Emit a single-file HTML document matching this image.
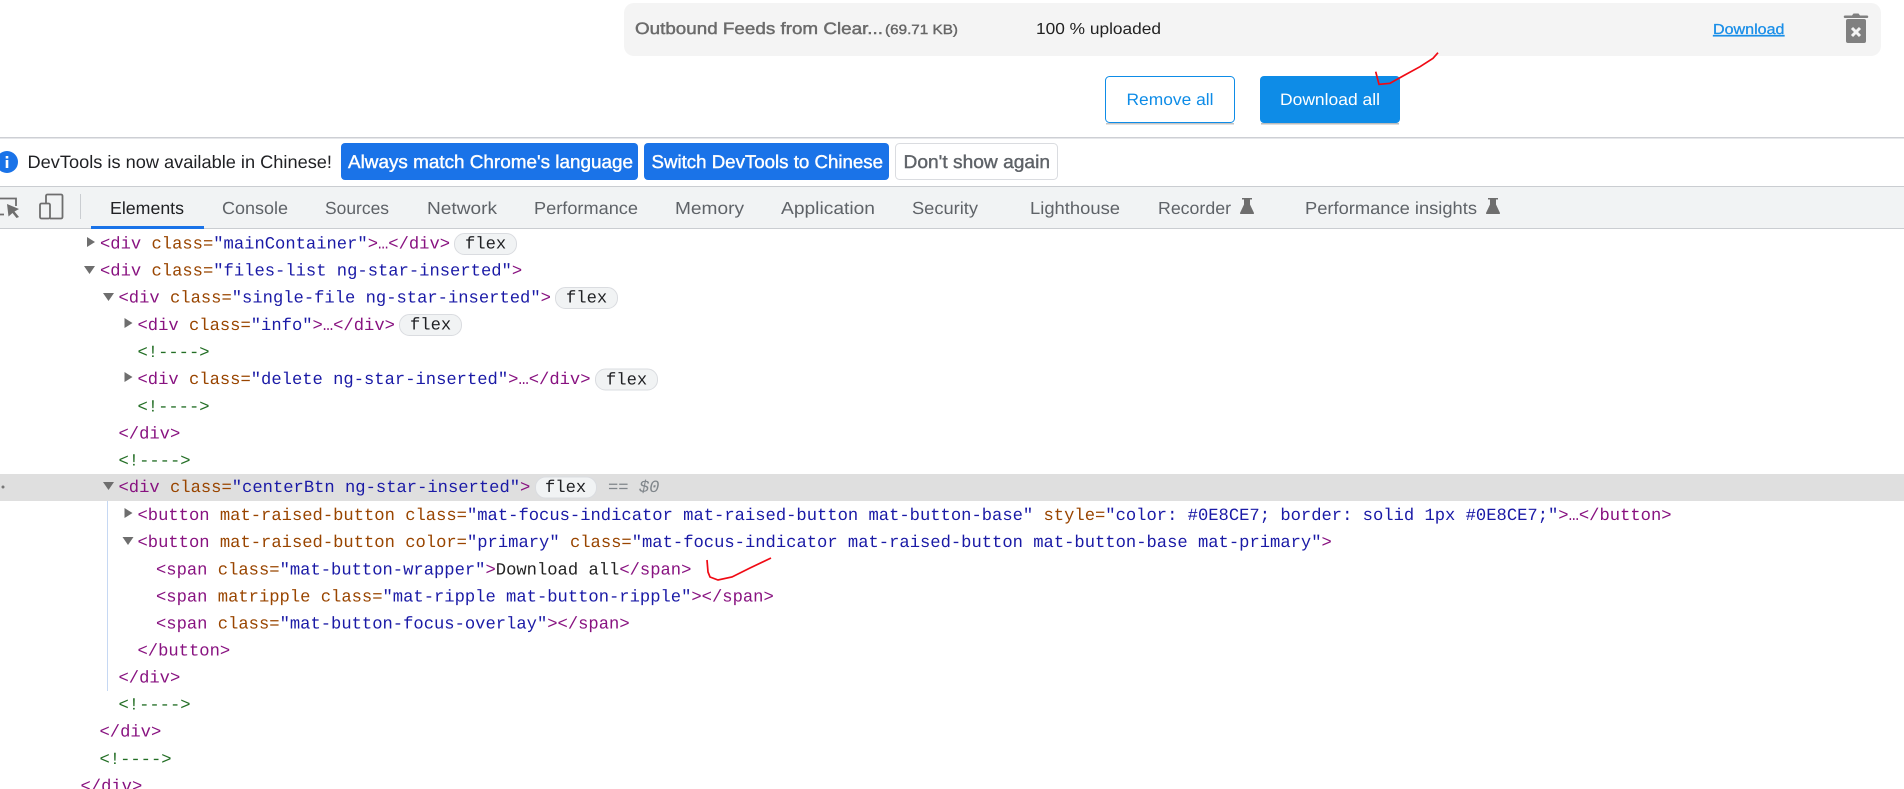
<!DOCTYPE html>
<html><head><meta charset="utf-8"><style>
html,body{margin:0;padding:0;background:#fff;width:1904px;height:789px;overflow:hidden}
svg{display:block;position:absolute;left:0;top:0}
text{white-space:pre;text-rendering:geometricPrecision}
.ui{font-family:"Liberation Sans",sans-serif}
.m{font-family:"Liberation Mono",monospace;font-size:17.17px;fill:#881280}
.a{fill:#994500}.v{fill:#1a1aa6}.c{fill:#236e25}.k{fill:#222}
.tab{font-family:"Liberation Sans",sans-serif;font-size:17.5px;fill:#5f6368}
.pill{fill:#f1f3f4;stroke:#dadce0;stroke-width:1}
.tri{fill:#6e6e6e}
</style></head><body>
<svg width="1904" height="789" viewBox="0 0 1904 789" xmlns="http://www.w3.org/2000/svg">
<rect width="1904" height="789" fill="#fff"/>
<!-- upload row -->
<rect x="624" y="3" width="1257" height="53" rx="10" fill="#f4f4f4"/>
<text class="ui" x="635" y="34" font-size="16.500" fill="#6b6b6b" stroke="#6b6b6b" stroke-width=".45" textLength="248" lengthAdjust="spacingAndGlyphs">Outbound Feeds from Clear...</text>
<text class="ui" x="885" y="34" font-size="13.500" fill="#666" stroke="#666" stroke-width=".4" textLength="73" lengthAdjust="spacingAndGlyphs">(69.71 KB)</text>
<text class="ui" x="1036" y="34" font-size="16" fill="#222" textLength="125" lengthAdjust="spacingAndGlyphs">100 % uploaded</text>
<text class="ui" x="1713" y="34" font-size="14.500" fill="#1b8fe8" stroke="#1b8fe8" stroke-width=".3" text-decoration="underline" textLength="71.500" lengthAdjust="spacingAndGlyphs">Download</text>
<!-- trash -->
<path d="M1845 15.500h7l1.500-2h5l1.500 2h7a1.200 1.200 0 0 1 0 2.500h-22a1.200 1.200 0 0 1 0-2.500z" fill="#808080"/>
<rect x="1846" y="19" width="20" height="24" rx="2" fill="#808080"/>
<path d="M1852 28l8 8M1860 28l-8 8" stroke="#f4f4f4" stroke-width="3"/>
<!-- action buttons -->
<rect x="1105.500" y="76.500" width="129" height="46" rx="4" fill="#fff" stroke="#0e8ce7"/>
<rect x="1106" y="123" width="128" height="1.500" fill="#c4c4c4"/>
<rect x="1260" y="76" width="140" height="47" rx="4" fill="#0e8ce7"/>
<rect x="1261" y="123" width="138" height="1.500" fill="#bbb"/>
<text class="ui" x="1126.500" y="105" font-size="16.500" fill="#0e8ce7" textLength="87" lengthAdjust="spacingAndGlyphs">Remove all</text>
<text class="ui" x="1280" y="105" font-size="16.500" fill="#fff" textLength="100" lengthAdjust="spacingAndGlyphs">Download all</text>
<path d="M1375.700 71.700L1379 84.300L1390 83.300L1403 76L1420 66.700L1433 58.300L1438 52.700" fill="none" stroke="#f00a14" stroke-width="1.700"/>
<!-- infobar -->
<rect x="0" y="137" width="1904" height="1.500" fill="#cdcfd4"/>
<circle cx="7" cy="162" r="11" fill="#1a73e8"/>
<rect x="5.700" y="160" width="2.600" height="8" fill="#fff"/><rect x="5.700" y="156" width="2.600" height="2.500" fill="#fff"/>
<text class="ui" x="27.500" y="168" font-size="18" fill="#202124" textLength="304.500" lengthAdjust="spacingAndGlyphs">DevTools is now available in Chinese!</text>
<rect x="341" y="143" width="297" height="37" rx="4" fill="#1a73e8"/>
<text class="ui" x="348" y="168" font-size="18.500" fill="#fff" stroke="#fff" stroke-width=".4" textLength="285" lengthAdjust="spacingAndGlyphs">Always match Chrome's language</text>
<rect x="644" y="143" width="245" height="37" rx="4" fill="#1a73e8"/>
<text class="ui" x="651.500" y="168" font-size="18.500" fill="#fff" stroke="#fff" stroke-width=".4" textLength="231.500" lengthAdjust="spacingAndGlyphs">Switch DevTools to Chinese</text>
<rect x="895.500" y="143.500" width="162" height="36" rx="4" fill="#fff" stroke="#dadce0"/>
<text class="ui" x="903.500" y="168" font-size="18.500" fill="#5f6368" stroke="#5f6368" stroke-width=".4" textLength="146.500" lengthAdjust="spacingAndGlyphs">Don't show again</text>
<!-- toolbar -->
<rect x="0" y="186" width="1904" height="43" fill="#f1f3f4"/>
<rect x="0" y="186" width="1904" height="1" fill="#cacdd1"/>
<rect x="0" y="228" width="1904" height="1" fill="#cacdd1"/>
<rect x="91" y="226" width="113" height="3" fill="#1a73e8"/>
<path d="M0 198.500H16V206M0 214.500H4" fill="none" stroke="#6e6e6e" stroke-width="1.800"/>
<path d="M7 204L19 209L14.500 211.500L19 217L16.500 218L12.500 213L8.500 216.500z" fill="#6e6e6e"/>
<path d="M46 203V196a1.500 1.500 0 0 1 1.500-1.500H61a1.500 1.500 0 0 1 1.500 1.500V217a1.500 1.500 0 0 1-1.500 1.500H50" fill="none" stroke="#6e6e6e" stroke-width="1.800"/>
<rect x="40" y="203.500" width="10" height="15" rx="1.500" fill="none" stroke="#6e6e6e" stroke-width="1.800"/>
<rect x="80" y="194" width="1" height="25" fill="#cacdd1"/>
<text class="tab" x="110" y="214" style="fill:#202124" textLength="74" lengthAdjust="spacingAndGlyphs">Elements</text>
<text class="tab" x="222" y="214" textLength="66" lengthAdjust="spacingAndGlyphs">Console</text>
<text class="tab" x="325" y="214" textLength="64" lengthAdjust="spacingAndGlyphs">Sources</text>
<text class="tab" x="427" y="214" textLength="70" lengthAdjust="spacingAndGlyphs">Network</text>
<text class="tab" x="534" y="214" textLength="104" lengthAdjust="spacingAndGlyphs">Performance</text>
<text class="tab" x="675" y="214" textLength="69" lengthAdjust="spacingAndGlyphs">Memory</text>
<text class="tab" x="781" y="214" textLength="94" lengthAdjust="spacingAndGlyphs">Application</text>
<text class="tab" x="912" y="214" textLength="66" lengthAdjust="spacingAndGlyphs">Security</text>
<text class="tab" x="1030" y="214" textLength="90" lengthAdjust="spacingAndGlyphs">Lighthouse</text>
<text class="tab" x="1158" y="214" textLength="73" lengthAdjust="spacingAndGlyphs">Recorder</text>
<text class="tab" x="1305" y="214" textLength="172" lengthAdjust="spacingAndGlyphs">Performance insights</text>
<path d="M1242 198h10v1.500h-2v5l4 8.500a.8.8 0 0 1-.8 1h-12.400a.8.8 0 0 1-.8-1l4-8.500v-5h-2z" fill="#6e6e6e"/>
<path d="M1488 198h10v1.500h-2v5l4 8.500a.8.8 0 0 1-.8 1h-12.400a.8.8 0 0 1-.8-1l4-8.500v-5h-2z" fill="#6e6e6e"/>
<!-- selection -->
<rect x="0" y="474" width="1904" height="27" fill="#dfdfdf"/>
<circle cx="3" cy="487" r="1.500" fill="#777"/>
<rect x="107" y="501" width="1" height="190" fill="#c6d8f3"/>
<!-- triangles -->
<path class="tri" d="M87 237l8 5-8 5z"/>
<path class="tri" d="M84 266h11l-5.500 8z"/>
<path class="tri" d="M103 293h11l-5.500 8z"/>
<path class="tri" d="M124.500 318l8 5-8 5z"/>
<path class="tri" d="M124.500 372l8 5-8 5z"/>
<path class="tri" d="M103 482h11l-5.500 8z"/>
<path class="tri" d="M124.500 508l8 5-8 5z"/>
<path class="tri" d="M122.500 537h11l-5.500 8z"/>
<!-- pills -->
<rect class="pill" x="454.500" y="233.500" width="62" height="21" rx="10"/>
<rect class="pill" x="555.500" y="287.500" width="62" height="21" rx="10"/>
<rect class="pill" x="399.500" y="314.500" width="62" height="21" rx="10"/>
<rect class="pill" x="595.500" y="369" width="62" height="21" rx="10"/>
<rect x="535.500" y="477" width="61" height="21" rx="10" fill="#f1f3f4" stroke="#dadce0"/>
<g class="m" style="fill:#202124">
<text x="465" y="248.500">flex</text><text x="566" y="302.500">flex</text><text x="410" y="329.500">flex</text><text x="606" y="384.500">flex</text><text x="545" y="492">flex</text>
</g>
<text class="m" x="608" y="492" style="fill:#80868b">== <tspan font-style="italic">$0</tspan></text>
<!-- code -->
<text class="m" x="100" y="248.400">&lt;div <tspan class="a">class=</tspan><tspan class="v">"mainContainer"</tspan>&gt;…&lt;/div&gt;</text>
<text class="m" x="100" y="275.600">&lt;div <tspan class="a">class=</tspan><tspan class="v">"files-list ng-star-inserted"</tspan>&gt;</text>
<text class="m" x="118.500" y="302.700">&lt;div <tspan class="a">class=</tspan><tspan class="v">"single-file ng-star-inserted"</tspan>&gt;</text>
<text class="m" x="137.500" y="329.900">&lt;div <tspan class="a">class=</tspan><tspan class="v">"info"</tspan>&gt;…&lt;/div&gt;</text>
<text class="m c" x="137.500" y="357" style="fill:#236e25">&lt;!----&gt;</text>
<text class="m" x="137.500" y="384.200">&lt;div <tspan class="a">class=</tspan><tspan class="v">"delete ng-star-inserted"</tspan>&gt;…&lt;/div&gt;</text>
<text class="m c" x="137.500" y="411.400" style="fill:#236e25">&lt;!----&gt;</text>
<text class="m" x="118.500" y="438.400">&lt;/div&gt;</text>
<text class="m c" x="118.500" y="465.600" style="fill:#236e25">&lt;!----&gt;</text>
<text class="m" x="118.500" y="492">&lt;div <tspan class="a">class=</tspan><tspan class="v">"centerBtn ng-star-inserted"</tspan>&gt;</text>
<text class="m" x="137.500" y="519.900">&lt;button <tspan class="a">mat-raised-button class=</tspan><tspan class="v">"mat-focus-indicator mat-raised-button mat-button-base"</tspan> <tspan class="a">style=</tspan><tspan class="v">"color: #0E8CE7; border: solid 1px #0E8CE7;"</tspan>&gt;…&lt;/button&gt;</text>
<text class="m" x="137.500" y="547">&lt;button <tspan class="a">mat-raised-button color=</tspan><tspan class="v">"primary"</tspan> <tspan class="a">class=</tspan><tspan class="v">"mat-focus-indicator mat-raised-button mat-button-base mat-primary"</tspan>&gt;</text>
<text class="m" x="156" y="574.400">&lt;span <tspan class="a">class=</tspan><tspan class="v">"mat-button-wrapper"</tspan>&gt;<tspan class="k">Download all</tspan>&lt;/span&gt;</text>
<text class="m" x="156" y="601.400">&lt;span <tspan class="a">matripple class=</tspan><tspan class="v">"mat-ripple mat-button-ripple"</tspan>&gt;&lt;/span&gt;</text>
<text class="m" x="156" y="628.400">&lt;span <tspan class="a">class=</tspan><tspan class="v">"mat-button-focus-overlay"</tspan>&gt;&lt;/span&gt;</text>
<text class="m" x="137.500" y="655.400">&lt;/button&gt;</text>
<text class="m" x="118.500" y="682.400">&lt;/div&gt;</text>
<text class="m c" x="118.500" y="709.500" style="fill:#236e25">&lt;!----&gt;</text>
<text class="m" x="99.500" y="736.700">&lt;/div&gt;</text>
<text class="m c" x="99.500" y="763.800" style="fill:#236e25">&lt;!----&gt;</text>
<text class="m" x="80.500" y="791">&lt;/div&gt;</text>
<path d="M707 560L708 572L710 577L718 580L732 577L750 568L771 558" fill="none" stroke="#f00a14" stroke-width="1.700"/>
</svg>
</body></html>
